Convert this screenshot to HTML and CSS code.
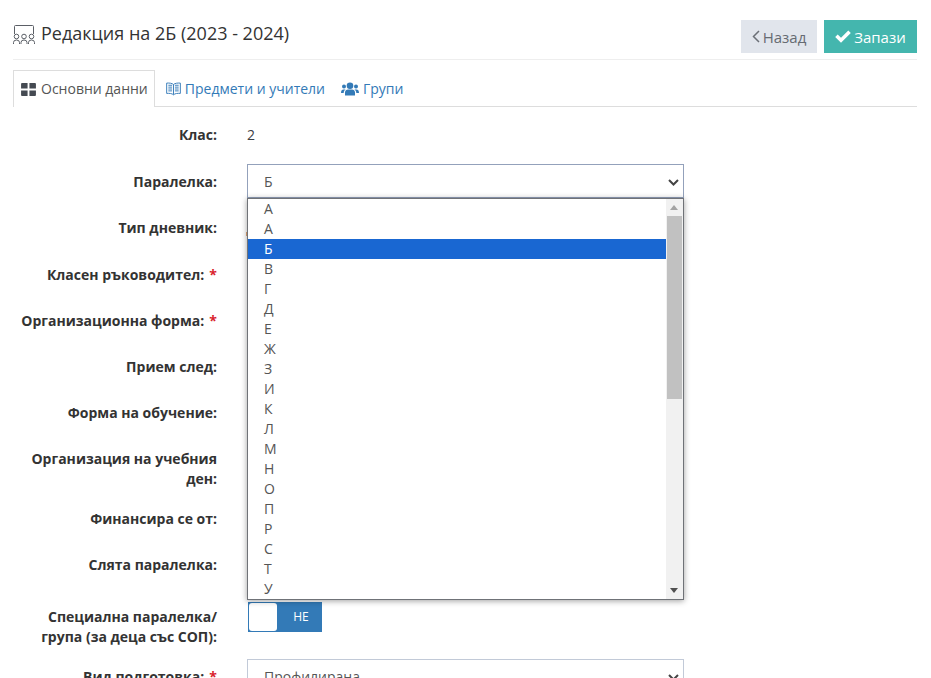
FILE: index.html
```html
<!DOCTYPE html>
<html lang="bg">
<head>
<meta charset="utf-8">
<title>Редакция на 2Б (2023 - 2024)</title>
<link rel="stylesheet" href="styles.css">
</head>
<body>
<div class="page">
  <header class="head">
    <h1 class="title">
      <svg class="title-icon" width="22" height="19" viewBox="0 0 22 19" fill="none" stroke="#5b5f66" stroke-width="1">
        <path d="M1.500 9V1.500a1 1 0 0 1 1-1h17a1 1 0 0 1 1 1V9"/>
        <circle cx="3.500" cy="11.500" r="2.300"/><circle cx="11" cy="11.500" r="2.300"/><circle cx="18.500" cy="11.500" r="2.300"/>
        <path d="M.5 19v-1.500a3 2.500 0 0 1 6 0V19M8 19v-1.500a3 2.500 0 0 1 6 0V19M15.500 19v-1.500a3 2.500 0 0 1 6 0V19"/>
      </svg>
      <span>Редакция на 2Б (2023 - 2024)</span>
    </h1>
    <div class="actions">
      <a class="btn btn-back">
        <svg width="8" height="13" viewBox="0 0 8 13" fill="none" stroke="#6b6f76" stroke-width="1.500"><path d="M7 1 1.500 6.500 7 12"/></svg>
        <span>Назад</span>
      </a>
      <a class="btn btn-save">
        <svg width="16" height="13" viewBox="0 0 16 13" fill="#fff"><path d="M6 12.800.2 7l2.500-2.500L6 7.800 13.300.4 15.800 3z"/></svg>
        <span>Запази</span>
      </a>
    </div>
  </header>

  <nav class="tabs">
    <a class="tab tab-active">
      <svg width="15" height="13" viewBox="0 0 16 14" fill="#454a52"><path d="M1 0h6v6H0V1a1 1 0 0 1 1-1zM9 0h6a1 1 0 0 1 1 1v5H9zM0 8h7v6H1a1 1 0 0 1-1-1zM9 8h7v5a1 1 0 0 1-1 1H9z"/></svg>
      <span>Основни данни</span>
    </a>
    <a class="tab">
      <svg width="15" height="14" viewBox="0 0 16 14" fill="none" stroke="#337ab7" stroke-width="1"><path d="M8 2.200C6.500.8 3.500.5.700.7v11c2.800-.2 5.800 0 7.300 1.500 1.500-1.500 4.500-1.700 7.300-1.500V.7C12.500.5 9.500.8 8 2.200zM8 2.200V13M2.500 3h4M2.500 5h4M2.500 7h4M2.500 9h4M9.500 3h4M9.500 5h4M9.500 7h4M9.500 9h4"/></svg>
      <span>Предмети и учители</span>
    </a>
    <a class="tab">
      <svg width="18" height="14" viewBox="0 0 18 14" fill="#337ab7"><circle cx="9" cy="3.800" r="3.300"/><circle cx="3" cy="4.500" r="2"/><circle cx="15" cy="4.500" r="2"/><path d="M4 13.500v-3C4 8.500 5.500 7.500 7 7.500h4c1.500 0 3 1 3 3v3zM0 11c0-2.500 1-3.500 2.500-3.500h2c-1 .8-1.800 1.700-1.800 3.500zM18 11c0-2.500-1-3.500-2.500-3.500h-2c1 .8 1.800 1.700 1.800 3.500z"/></svg>
      <span>Групи</span>
    </a>
  </nav>

  <form class="form">
    <div class="row"><div class="label">Клас:</div><div class="value">2</div></div>
    <div class="row row-wide row-select"><div class="label">Паралелка:</div><div class="select select-focus"><span>Б</span><svg class="chev" width="11" height="7" viewBox="0 0 11 7" fill="none" stroke="#444" stroke-width="2"><path d="M1 1l4.500 4.500L10 1"/></svg></div></div>
    <div class="row row-wide"><div class="label">Тип дневник:</div><span class="peek"></span></div>
    <div class="row"><div class="label">Класен ръководител: <i>*</i></div></div>
    <div class="row"><div class="label">Организационна форма: <i>*</i></div></div>
    <div class="row"><div class="label">Прием след:</div></div>
    <div class="row"><div class="label">Форма на обучение:</div></div>
    <div class="row row-tall"><div class="label">Организация на учебния ден:</div></div>
    <div class="row"><div class="label">Финансира се от:</div></div>
    <div class="row"><div class="label">Слята паралелка:</div></div>
    <div class="row row-switch"><div class="label">Специална паралелка/ група (за деца със СОП):</div>
      <div class="switch"><span class="knob"></span><span class="switch-text">НЕ</span></div>
    </div>
    <div class="row row-select"><div class="label">Вид подготовка: <i>*</i></div><div class="select"><span>Профилирана</span><svg class="chev" width="11" height="7" viewBox="0 0 11 7" fill="none" stroke="#444" stroke-width="2"><path d="M1 1l4.500 4.500L10 1"/></svg></div></div>
  </form>
</div>

<div class="dropdown">
  <ul class="options">
    <li>А</li><li>А</li><li class="selected">Б</li><li>В</li><li>Г</li><li>Д</li><li>Е</li><li>Ж</li><li>З</li><li>И</li><li>К</li><li>Л</li><li>М</li><li>Н</li><li>О</li><li>П</li><li>Р</li><li>С</li><li>Т</li><li>У</li>
  </ul>
  <div class="scrollbar">
    <svg class="arrow" width="16" height="17" viewBox="0 0 16 17" fill="#a3a3a3"><path d="M4 11l4-5 4 5z"/></svg>
    <div class="thumb"></div>
    <svg class="arrow arrow-down" width="16" height="17" viewBox="0 0 16 17" fill="#505050"><path d="M4 6h8l-4 5z"/></svg>
  </div>
</div>
</body>
</html>
```
FILE: styles.css
```css
* { box-sizing: border-box; }
html, body { margin: 0; height: 100%; overflow: hidden; background: #fff; }
body { font-family: "Open Sans", "Noto Sans", sans-serif; font-size: 14px; line-height: 20px; color: #3c4043; }
.page { padding: 20px 14px 0 13px; }
.head { display: flex; justify-content: space-between; align-items: flex-start; height: 40px; border-bottom: 1px solid #eeeeee; }
.title { margin: 0; display: flex; align-items: center; gap: 6px; font-size: 18px; font-weight: 400; line-height: 26px; color: #333; }
.title-icon { flex: none; margin-top: 3px; }
.actions { display: flex; gap: 7px; }
.btn { display: flex; align-items: center; justify-content: center; gap: 3px; height: 33px; font-size: 15px; }
.btn-back { width: 76px; background: #e1e5ec; color: #666b72; }
.btn-save { width: 93px; background: #44b6ae; color: #fff; }
.tabs { display: flex; margin-top: 10px; height: 37px; border-bottom: 1px solid #dddddd; }
.tab { display: flex; align-items: center; gap: 4px; padding: 0 7px; height: 37px; color: #337ab7; border: 1px solid transparent; border-bottom: 0; }
.tab-active { gap: 5px; padding-right: 6px; color: #555; background: #fff; border-color: #dddddd; margin-right: 3px; }
.form { padding-top: 11px; }
.row { display: flex; align-items: flex-start; gap: 30px; min-height: 34px; margin-bottom: 12px; }
.row-wide { margin-bottom: 13px; }
.label { width: 204px; flex: none; text-align: right; font-weight: 700; color: #333; padding-top: 7px; }
.label i { font-style: normal; color: #d9232e; font-weight: 700; padding-left: 1.500px; }
.row-select .label { padding-top: 8px; }
.peek { width: 1px; height: 4px; margin: 21px 0 0 -1px; background: #e3a878; }
.row-tall { min-height: 48px; }
.value { padding-top: 7px; }
.select { width: 437px; height: 34px; padding: 2px 16px 0; display: flex; align-items: center; justify-content: space-between; border: 1px solid #c2cad8; background: #fff; color: #555; }
.select-focus { border-color: #93a1bb; }
.chev { margin-right: -12px; }
.row-switch { min-height: 53px; }
.row-switch .label { padding-top: 13px; }
.switch { width: 74px; height: 30px; margin: 8px 0 0 1px; background: #337ab7; display: flex; border: 1px solid #337ab7; }
.knob { width: 28px; background: #fff; border-radius: 3px; }
.switch-text { flex: 1; text-align: center; color: #fff; font-size: 12px; line-height: 28px; padding-left: 4px; }
.dropdown { position: absolute; left: 247px; top: 198px; width: 437px; height: 402px; display: flex; background: #fff; border: 1px solid #6f7277; box-shadow: 0 1px 6px rgba(0,0,0,.38); }
.options { list-style: none; margin: 0; padding: 0; flex: 1; min-width: 0; }
.options li { height: 20px; line-height: 20px; padding-left: 16px; color: #555; }
.options li.selected { background: #1967d2; color: #fff; }
.scrollbar { width: 17px; flex: none; background: #f1f1f1; display: flex; flex-direction: column; }
.arrow { flex: none; }
.thumb { height: 183px; background: #c1c1c1; margin: 0 1px; }
.arrow-down { margin-top: auto; }
```
